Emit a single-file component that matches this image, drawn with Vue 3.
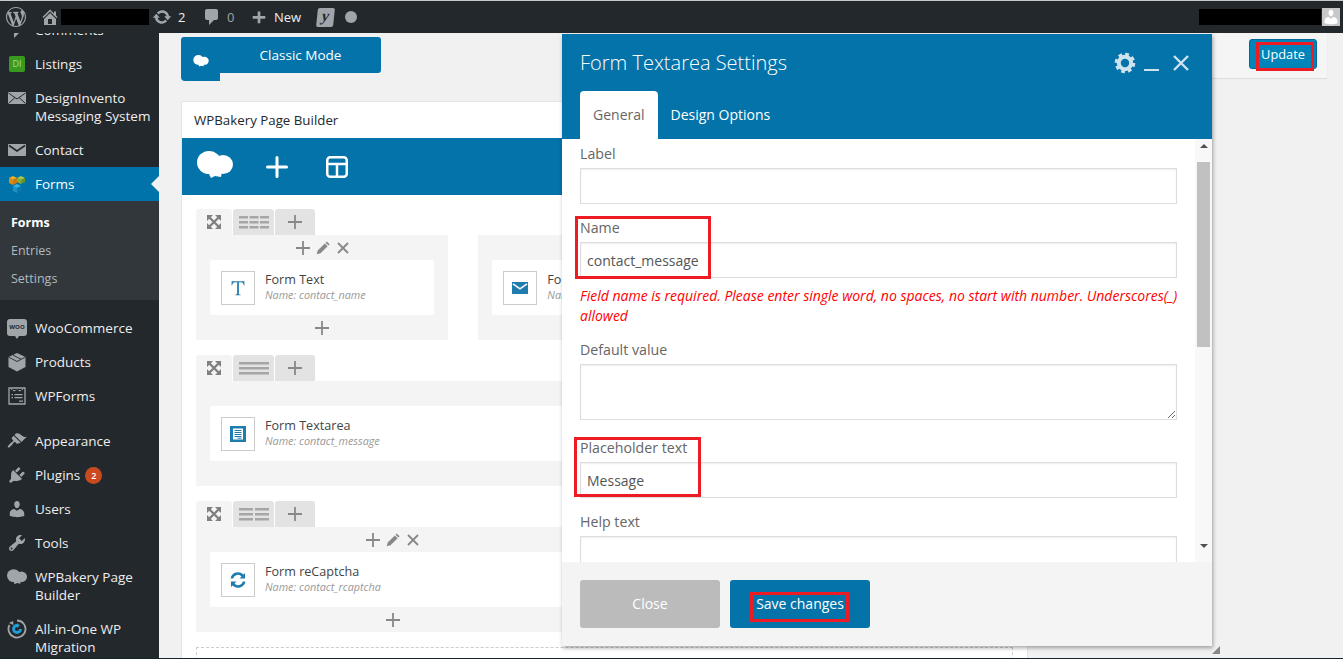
<script setup>
const menu = [
  { label: 'Comments', icon: 'i-comment' },
  { label: 'Listings', icon: 'di' },
  { label: 'DesignInvento Messaging System', icon: 'i-mail-line', tall: true },
  { label: 'Contact', icon: 'i-mail' },
  { label: 'Forms', icon: 'i-forms', active: true },
]
const subs = [
  { label: 'Forms', current: true },
  { label: 'Entries' },
  { label: 'Settings' },
]
const shop = [
  { label: 'WooCommerce', icon: 'woo' },
  { label: 'Products', icon: 'i-box' },
  { label: 'WPForms', icon: 'i-wpforms' },
]
const site = [
  { label: 'Appearance', icon: 'i-brush' },
  { label: 'Plugins', icon: 'i-plug', badge: 2 },
  { label: 'Users', icon: 'i-user' },
  { label: 'Tools', icon: 'i-tool' },
  { label: 'WPBakery Page Builder', icon: 'i-cloud', tall: true },
  { label: 'All-in-One WP Migration', icon: 'i-ring', tall: true },
]
const rows = [
  {
    groups: 3,
    controls: true,
    cols: [
      { title: 'Form Text', name: 'contact_name', icon: 'i-t' },
      { title: 'Form Email', name: 'contact_email', icon: 'i-env' },
      { title: 'Form Submit', name: 'contact_submit', icon: 'i-t' },
    ],
  },
  {
    groups: 1,
    controls: false,
    cols: [{ title: 'Form Textarea', name: 'contact_message', icon: 'i-doc' }],
  },
  {
    groups: 2,
    controls: true,
    cols: [
      { title: 'Form reCaptcha', name: 'contact_rcaptcha', icon: 'i-sync' },
      { title: 'Form Submit', name: 'contact_submit', icon: 'i-t' },
    ],
  },
]
const barSets = {
  1: [[0, 30]],
  2: [[0, 14], [16, 14]],
  3: [[0, 9], [10.5, 9], [21, 9]],
}
</script>

<template>
  <div class="page">
    <svg class="defs" aria-hidden="true">
      <symbol id="i-wp" viewBox="0 0 20 20"><path d="M20 10c0-5.51-4.49-10-10-10C4.48 0 0 4.49 0 10c0 5.52 4.48 10 10 10 5.51 0 10-4.48 10-10zM7.78 15.37L4.37 6.22c.55-.02 1.17-.08 1.17-.08.5-.06.44-1.13-.06-1.11 0 0-1.45.11-2.37.11-.18 0-.37 0-.58-.01C4.12 2.69 6.87 1.11 10 1.11c2.33 0 4.45.87 6.05 2.34-.68-.11-1.65.39-1.65 1.58 0 .74.45 1.36.9 2.1.35.61.55 1.36.55 2.46 0 1.49-1.4 5-1.4 5l-3.03-8.37c.54-.02.82-.17.82-.17.5-.05.44-1.25-.06-1.22 0 0-1.44.12-2.38.12-.87 0-2.33-.12-2.33-.12-.5-.03-.56 1.2-.06 1.22l.92.08 1.26 3.41zM17.41 10c.24-.64.74-1.87.43-4.25.7 1.29 1.05 2.71 1.05 4.25 0 3.29-1.73 6.24-4.4 7.78.97-2.59 1.94-5.2 2.92-7.78zM6.1 18.09C3.12 16.65 1.11 13.53 1.11 10c0-1.3.23-2.48.72-3.59C3.25 10.3 4.67 14.2 6.1 18.09zm4.03-6.63l2.58 6.98c-.86.29-1.76.45-2.71.45-.79 0-1.57-.11-2.29-.33.81-2.38 1.62-4.74 2.42-7.1z"/></symbol>
      <symbol id="i-home" viewBox="0 0 20 20"><path d="M16 8.5l1.53 1.53-1.06 1.06L10 4.62l-6.47 6.47-1.06-1.06L10 2.5l4 4v-2h2v4zm-6-2.46l6 5.99V18H4v-5.97zM12 17v-5H8v5h4z"/></symbol>
      <symbol id="i-update" viewBox="0 0 20 20"><path d="M10.2 3.28c3.53 0 6.43 2.61 6.92 6h2.08l-3.5 4-3.5-4h2.32c-.45-1.97-2.21-3.45-4.32-3.45-1.45 0-2.73.71-3.54 1.78L4.95 5.66C6.23 4.2 8.11 3.28 10.2 3.28zm-.4 13.44c-3.52 0-6.43-2.61-6.92-6H.8l3.5-4c1.17 1.33 2.33 2.67 3.5 4H5.48c.45 1.97 2.21 3.45 4.32 3.45 1.45 0 2.73-.71 3.54-1.78l1.71 1.95c-1.28 1.46-3.15 2.38-5.25 2.38z"/></symbol>
      <symbol id="i-comment" viewBox="0 0 20 20"><path d="M5 2h9c1.1 0 2 .9 2 2v7c0 1.1-.9 2-2 2h-2l-5 5v-5H5c-1.1 0-2-.9-2-2V4c0-1.1.9-2 2-2z"/></symbol>
      <symbol id="i-plus-bold" viewBox="0 0 20 20"><path d="M17 9v3h-5.5v5h-3v-5H3V9h5.5V4h3v5z"/></symbol>
      <symbol id="i-mail" viewBox="0 0 20 20"><path d="M2 4h16c.6 0 1 .4 1 1v10c0 .6-.4 1-1 1H2c-.6 0-1-.4-1-1V5c0-.6.4-1 1-1z"/><path d="M2 5.5l8 5.5 8-5.5" fill="none" stroke="#23282d" stroke-width="1.6"/></symbol>
      <symbol id="i-mail-line" viewBox="0 0 20 20"><path d="M2 4h16c.6 0 1 .4 1 1v10c0 .6-.4 1-1 1H2c-.6 0-1-.4-1-1V5c0-.6.4-1 1-1z"/><path d="M1.500 5l8.500 6 8.500-6M1.500 15.500L8 9.500M18.500 15.500L12 9.500" fill="none" stroke="#23282d" stroke-width="1"/></symbol>
      <symbol id="i-forms" viewBox="0 0 20 20">
        <path d="M2 4l4-2 4 2-4 2z" fill="#f2b01e"/><path d="M2 4l4 2v5L2 9z" fill="#e08a12"/><path d="M10 4L6 6v5l4-2z" fill="#c77a10"/>
        <path d="M10 4l4-2 4 2-4 2z" fill="#a8c84a"/><path d="M10 4l4 2v4l-4-2z" fill="#8ab033"/><path d="M18 4l-4 2v4l4-2z" fill="#6f9426"/>
        <path d="M6 12l4-2 4 2-4 2z" fill="#35b5e5"/><path d="M6 12l4 2v5l-4-2z" fill="#1a94c8"/><path d="M14 12l-4 2v5l4-2z" fill="#0e78a8"/>
      </symbol>
      <symbol id="i-box" viewBox="0 0 20 20"><path d="M10 1l8.500 4v10L10 19.500 1.500 15V5z"/><path d="M1.800 5.200L10 9.500l8.200-4.300M6 3.200l8 4" fill="none" stroke="#23282d" stroke-width=".9"/></symbol>
      <symbol id="i-wpforms" viewBox="0 0 20 20"><path d="M2 2h16v16H2z" fill="none" stroke="currentColor" stroke-width="1.300"/><path d="M4 2.500l3 3 3-2 3 2 3-3V4H4zM4.500 8H6v1.300H4.500zM7.500 8h8v1.300h-8zM4.500 11H6v1.300H4.500zM7.500 11h8v1.300h-8zM12 14.500h4v1.300h-4z"/></symbol>
      <symbol id="i-brush" viewBox="0 0 20 20"><path d="M14.480 11.060L7.410 3.990l1.500-1.500c.5-.56 2.300-.47 3.510.32 1.210.8 1.430 1.280 2.910 2.100 1.180.64 2.450 1.260 4.450.85zm-.71.71L6.700 4.700 4.930 6.470c-.39.39-.39 1.020 0 1.410l1.060 1.060c.39.39.39 1.030 0 1.420-.6.6-1.430 1.110-2.210 1.690-.35.26-.7.53-1.010.84-1.340 1.340-2.500 2.930-1.880 3.550.62.62 2.210-.54 3.550-1.880.31-.31.580-.66.840-1.010.58-.78 1.090-1.610 1.690-2.210.39-.39 1.030-.39 1.420 0l1.060 1.060c.39.39 1.020.39 1.410 0z"/></symbol>
      <symbol id="i-plug" viewBox="0 0 20 20"><path d="M13.110 4.360L9.870 7.600 8 5.730l3.240-3.240c.35-.34 1.050-.2 1.560.32.52.51.66 1.210.31 1.550zm-8 1.770l.91-1.120 9.010 9.010-1.190.84c-.71.71-2.630 1.160-3.820 1.160H6.140L4.900 17.260c-.59.59-1.540.59-2.120 0-.59-.58-.59-1.530 0-2.120l1.240-1.240v-3.880c0-1.130.4-3.190 1.090-3.890zm7.260 3.970l3.240-3.240c.34-.35 1.040-.21 1.550.31.52.51.66 1.210.31 1.550l-3.240 3.250z"/></symbol>
      <symbol id="i-user" viewBox="0 0 20 20"><path d="M10 9.250c-2.270 0-2.730-3.440-2.730-3.440C7 4.020 7.820 2 9.970 2c2.160 0 2.980 2.020 2.710 3.810 0 0-.41 3.440-2.680 3.440zm0 2.570L12.720 10c2.390 0 4.520 2.330 4.520 4.530v2.490s-3.650 1.130-7.240 1.130c-3.650 0-7.240-1.130-7.240-1.130v-2.490c0-2.250 1.940-4.480 4.470-4.480z"/></symbol>
      <symbol id="i-tool" viewBox="0 0 20 20"><path d="M16.680 9.770c-1.340 1.340-3.300 1.670-4.950.99l-5.410 6.520c-.99.99-2.590.99-3.580 0s-.99-2.590 0-3.570l6.520-5.420c-.68-1.650-.35-3.610.99-4.950 1.280-1.280 3.120-1.620 4.720-1.060l-2.890 2.890 2.820 2.820 2.860-2.870c.53 1.580.18 3.390-1.080 4.650zM3.810 16.210c.4.39 1.040.39 1.430 0 .4-.4.4-1.040 0-1.430-.39-.4-1.030-.4-1.430 0-.39.39-.39 1.030 0 1.430z"/></symbol>
      <symbol id="i-cloud" viewBox="0 0 36 28"><ellipse cx="12" cy="11.500" rx="12" ry="11.500"/><ellipse cx="26" cy="13.500" rx="10" ry="9.500"/><path d="M11 21l14-1-1 6-6-1-4 2z"/></symbol>
      <symbol id="i-ring" viewBox="0 0 20 20"><path d="M10 1.500a8.500 8.500 0 1 1-7.500 4.500" fill="none" stroke="currentColor" stroke-width="1.800"/><path d="M2 4l4-2 .5 4z"/><path d="M13.500 10a3.500 3.500 0 1 1-3.500-3.500" fill="none" stroke="#1f9fd8" stroke-width="2.800"/><path d="M10 4l3 2.500L10 9z" fill="#1f9fd8"/></symbol>
      <symbol id="i-expand" viewBox="0 0 14 14"><path d="M0 0h6L0 6zM14 0v6L8 0zM0 14V8l6 6zM14 14H8l6-6z"/><path d="M2 2l10 10M12 2L2 12" fill="none" stroke="currentColor" stroke-width="2.400"/></symbol>
      <symbol id="i-pencil" viewBox="0 0 16 16"><path d="M11.500 1.500l3 3-1.300 1.300-3-3zM9.400 3.600l3 3-7.600 7.600-4 1 1-4z"/></symbol>
      <symbol id="i-t" viewBox="0 0 20 20"><path d="M2 1.500h16v5.500h-.7c-.3-2.800-1.200-4.300-3.800-4.300h-2.400v14.600c0 .8.500 1 2.200 1.100v.8H6.700v-.8c1.700-.1 2.200-.3 2.200-1.100V2.700H6.500c-2.600 0-3.500 1.500-3.800 4.300H2z"/></symbol>
      <symbol id="i-env" viewBox="0 0 16 12"><path d="M0 0h16v12H0z"/><path d="M1 1.800l7 5 7-5" fill="none" stroke="#fff" stroke-width="1.500"/></symbol>
      <symbol id="i-doc" viewBox="0 0 16 16"><path d="M0 0h16v16H0z"/><path d="M3 2.500h10v11H3z" fill="#fff"/><path d="M4.500 4.500h7M4.500 6.500h7M4.500 8.500h7M4.500 10.500h7M7.500 12.200h4" stroke="currentColor" stroke-width="1"/></symbol>
      <symbol id="i-sync" viewBox="0 0 16 16"><path d="M15 1v5.500H9.500l2.100-2.100A5 5 0 0 0 3.100 6.500H.6a7.500 7.500 0 0 1 12.800-3.900zM1 15V9.500h5.500l-2.100 2.100a5 5 0 0 0 8.500-2.100h2.500a7.500 7.500 0 0 1-12.800 3.900z"/></symbol>
    </svg>

    <header class="adminbar">
      <svg class="ab-wp"><use href="#i-wp" /></svg>
      <svg class="ab-home"><use href="#i-home" /></svg>
      <span class="redact redact-site"></span>
      <svg class="ab-update"><use href="#i-update" /></svg>
      <span class="ab-count">2</span>
      <svg class="ab-comment"><use href="#i-comment" /></svg>
      <span class="ab-count ab-zero">0</span>
      <svg class="ab-new"><use href="#i-plus-bold" /></svg>
      <span class="ab-label">New</span>
      <span class="ab-yoast">y</span>
      <span class="ab-dot"></span>
      <span class="ab-spacer"></span>
      <span class="redact redact-user"></span>
      <span class="ab-avatar">
        <svg viewBox="0 0 20 20"><use href="#i-user" /></svg>
      </span>
    </header>

    <div class="body">
      <aside class="sidebar">
        <nav class="menu">
          <template v-for="item in menu" :key="item.label">
            <a class="item" :class="{ tall: item.tall, active: item.active }">
              <span v-if="item.icon === 'di'" class="ic-di">DI</span>
              <svg v-else class="ic"><use :href="'#' + item.icon" /></svg>
              <span class="item-label">{{ item.label }}</span>
            </a>
          </template>
          <div class="submenu">
            <a v-for="s in subs" :key="s.label" class="sub" :class="{ current: s.current }">{{ s.label }}</a>
          </div>
          <div class="group">
            <a v-for="item in shop" :key="item.label" class="item">
              <span v-if="item.icon === 'woo'" class="ic-woo">WOO</span>
              <svg v-else class="ic"><use :href="'#' + item.icon" /></svg>
              <span class="item-label">{{ item.label }}</span>
            </a>
          </div>
          <div class="group">
            <a v-for="item in site" :key="item.label" class="item" :class="{ tall: item.tall }">
              <svg class="ic"><use :href="'#' + item.icon" /></svg>
              <span class="item-label">{{ item.label }}</span>
              <span v-if="item.badge" class="badge">{{ item.badge }}</span>
            </a>
          </div>
        </nav>
      </aside>

      <main class="main">
        <div class="toprow">
          <div class="classic">
            <span class="classic-tab"><svg><use href="#i-cloud" /></svg></span>
            <span class="classic-label">Classic Mode</span>
          </div>
          <div class="publish">
            <button class="update">Update</button>
          </div>
        </div>

        <section class="builder">
          <h2 class="builder-title">WPBakery Page Builder</h2>
          <div class="builder-bar">
            <svg class="bar-cloud"><use href="#i-cloud" /></svg>
            <svg class="bar-plus" viewBox="0 0 22 22"><path d="M11 1.500v19M1.500 11h19" /></svg>
            <svg class="bar-layout" viewBox="0 0 22 22"><rect x="1.250" y="1.250" width="19.500" height="19.500" rx="3" /><path d="M1.500 8h19M11 8v12.500" /></svg>
          </div>
          <div class="rows">
            <div v-for="(row, r) in rows" :key="r" class="row">
              <div class="row-tabs">
                <span class="tab tab-open"><svg class="i-expand"><use href="#i-expand" /></svg></span>
                <span class="tab tab-cols">
                  <svg viewBox="0 0 30 13" class="i-bars">
                    <template v-for="(b, i) in barSets[row.groups]" :key="i">
                      <rect v-for="y in [0, 5, 10]" :key="y" :x="b[0]" :y="y" :width="b[1]" height="2.500" />
                    </template>
                  </svg>
                </span>
                <span class="tab tab-add"><svg class="i-plus" viewBox="0 0 14 14"><path d="M7 0v14M0 7h14" /></svg></span>
              </div>
              <div class="row-body" :class="'cols-' + row.cols.length">
                <div v-for="col in row.cols" :key="col.title + col.name" class="col">
                  <div class="col-tools">
                    <template v-if="row.controls">
                      <svg class="i-plus" viewBox="0 0 14 14"><path d="M7 0v14M0 7h14" /></svg>
                      <svg class="i-pencil"><use href="#i-pencil" /></svg>
                      <svg class="i-close" viewBox="0 0 12 12"><path d="M1 1l10 10M11 1L1 11" /></svg>
                    </template>
                  </div>
                  <div class="card">
                    <span class="card-icon"><svg><use :href="'#' + col.icon" /></svg></span>
                    <div class="card-text">
                      <div class="card-title">{{ col.title }}</div>
                      <div class="card-name">Name: {{ col.name }}</div>
                    </div>
                  </div>
                  <div class="col-tools">
                    <svg v-if="row.controls" class="i-plus" viewBox="0 0 14 14"><path d="M7 0v14M0 7h14" /></svg>
                  </div>
                </div>
              </div>
            </div>
            <div class="dropzone"></div>
          </div>
        </section>
      </main>

      <section class="modal">
        <header class="modal-head">
          <div class="modal-top">
            <h1 class="modal-title">Form Textarea Settings</h1>
            <div class="modal-actions">
              <svg class="m-gear" viewBox="0 0 22 22"><circle cx="11" cy="11" r="6.200" class="gear-ring" /><circle cx="11" cy="11" r="8.800" class="gear-teeth" /></svg>
              <span class="m-min"></span>
              <svg class="m-close" viewBox="0 0 16 16"><path d="M1 1l14 14M15 1L1 15" /></svg>
            </div>
          </div>
          <div class="modal-tabs">
            <span class="m-tab on">General</span>
            <span class="m-tab">Design Options</span>
          </div>
        </header>

        <div class="modal-body">
          <div class="fields">
            <div class="field">
              <div class="f-label">Label</div>
              <div class="f-input"></div>
            </div>
            <div class="field">
              <div class="f-label">Name</div>
              <div class="f-input">contact_message</div>
              <div class="f-error">Field name is required. Please enter single word, no spaces, no start with number. Underscores(_) allowed</div>
              <span class="mark mark-name"></span>
            </div>
            <div class="field">
              <div class="f-label">Default value</div>
              <textarea class="f-area"></textarea>
            </div>
            <div class="field">
              <div class="f-label">Placeholder text</div>
              <div class="f-input">Message</div>
              <span class="mark mark-place"></span>
            </div>
            <div class="field">
              <div class="f-label">Help text</div>
              <div class="f-input"></div>
            </div>
          </div>
          <div class="scroll">
            <span class="arrow up"></span>
            <span class="thumb"></span>
            <span class="arrow down"></span>
          </div>
        </div>

        <footer class="modal-foot">
          <button class="btn btn-close">Close</button>
          <button class="btn btn-save">Save changes<span class="mark mark-save"></span></button>
        </footer>
        <span class="grip"></span>
      </section>

      <span class="mark mark-update"></span>
    </div>
    <div class="bottomline"></div>
  </div>
</template>

<style>
html, body { margin: 0; padding: 0; background: #f1f1f1; overflow: hidden; }
</style>

<style scoped>
* { box-sizing: border-box; }
.defs { position: absolute; width: 0; height: 0; }
.page {
  height: 659px;
  display: flex;
  flex-direction: column;
  overflow: hidden;
  font-family: "Open Sans", "Noto Sans", sans-serif;
  font-size: 14px;
  color: #444;
}

/* admin bar */
.adminbar {
  height: 33px;
  flex: none;
  display: flex;
  align-items: center;
  background: #23282d;
  border-top: 1px solid #c9c9c9;
  color: #eee;
  font-size: 13px;
  fill: #a0a5aa;
}
.adminbar svg { display: block; }
.ab-wp { width: 20px; height: 20px; margin-left: 6px; }
.ab-home { width: 20px; height: 20px; margin-left: 14px; }
.redact { background: #000; display: block; height: 16px; }
.redact-site { width: 88px; margin-left: 1px; }
.ab-update { width: 20px; height: 20px; margin-left: 3px; }
.ab-count { margin-left: 6px; width: 9px; }
.ab-comment { width: 20px; height: 20px; margin-left: 15px; }
.ab-zero { color: #9ea3a8; margin-left: 5px; }
.ab-new { width: 18px; height: 18px; margin-left: 14px; }
.ab-label { margin-left: 6px; }
.ab-yoast {
  width: 17px;
  height: 19px;
  margin-left: 16px;
  background: #a0a5aa;
  border-radius: 2px;
  transform: skewX(-6deg);
  color: #23282d;
  font: italic 700 16px/16px "Liberation Serif", serif;
  text-align: center;
}
.ab-dot { width: 12px; height: 12px; margin-left: 11px; border-radius: 50%; background: #a0a5aa; }
.ab-spacer { flex: 1; }
.redact-user { width: 122px; }
.ab-avatar { width: 18px; height: 18px; margin: 0 3px 0 1px; background: #c8c8c8; overflow: hidden; fill: #fff; }
.ab-avatar svg { width: 18px; height: 18px; }

/* body */
.body { flex: 1; min-height: 0; display: flex; position: relative; }

/* sidebar */
.sidebar { width: 159px; flex: none; background: #23282d; overflow: hidden; }
.menu { margin-top: -20px; }
.item {
  display: flex;
  align-items: center;
  height: 34px;
  color: #eee;
  fill: #a0a5aa;
  position: relative;
  font-size: 13.5px;
  line-height: 18px;
}
.item.tall { height: 52px; }
.item.active { background: #0073aa; color: #fff; }
.item.active::after {
  content: "";
  position: absolute;
  right: 0;
  top: 9px;
  border: 8px solid transparent;
  border-right-color: #f1f1f1;
  border-left-width: 0;
}
.ic { width: 20px; height: 20px; margin-left: 7px; flex: none; color: #a0a5aa; }
.tall .ic { margin-top: -18px; }
.item-label { margin-left: 8px; }
.ic-di {
  width: 16px;
  height: 16px;
  margin: 0 2px 0 9px;
  background: #3a9a1f;
  color: #a9dc96;
  border-radius: 2px;
  font-size: 9px;
  line-height: 16px;
  text-align: center;
  flex: none;
}
.ic-woo {
  width: 20px;
  height: 17px;
  margin: -2px 0 0 7px;
  background: #a0a5aa;
  color: #23282d;
  border-radius: 3px;
  font-size: 6px;
  font-weight: 700;
  line-height: 17px;
  text-align: center;
  flex: none;
  position: relative;
}
.ic-woo::after {
  content: "";
  position: absolute;
  left: 8px;
  bottom: -3px;
  border: 2px solid transparent;
  border-top-color: #a0a5aa;
  border-bottom-width: 0;
  border-top-width: 3px;
}
.submenu { background: #32373c; padding: 8px 0 7px; }
.sub { display: block; height: 28px; line-height: 28px; padding-left: 11px; font-size: 12.5px; color: #b4b9be; }
.sub.current { color: #fff; font-weight: 700; }
.group { margin-top: 11px; }
.badge {
  width: 17px;
  height: 17px;
  margin-left: 5px;
  border-radius: 50%;
  background: #ca4a1f;
  color: #fff;
  font-size: 9px;
  font-weight: 600;
  line-height: 17px;
  text-align: center;
}

/* main */
.main { flex: 1; min-width: 0; padding-left: 22px; background: #f1f1f1; overflow: hidden; }
.toprow { display: flex; justify-content: space-between; height: 48px; padding-right: 16px; }
.classic { display: flex; align-items: flex-start; margin-top: 4px; }
.classic-tab {
  width: 39px;
  height: 44px;
  background: #0473aa;
  border-radius: 3px 0 0 4px;
  padding: 18px 0 0 12px;
  fill: #fff;
}
.classic-tab svg { display: block; width: 16px; height: 12px; }
.classic-label {
  width: 161px;
  height: 36px;
  background: #0473aa;
  border-radius: 0 3px 3px 0;
  color: #fff;
  font-size: 13.5px;
  line-height: 36px;
  text-align: center;
}
.publish {
  width: 150px;
  height: 45px;
  background: #f5f5f5;
  box-shadow: 0 1px 1px rgba(0, 0, 0, .08);
  padding: 6px 10px 0 0;
  display: flex;
  justify-content: flex-end;
}
.update {
  width: 68px;
  height: 30px;
  background: #0085ba;
  border: 1px solid #006799;
  border-radius: 3px;
  color: #fff;
  font: 12.8px "Open Sans", sans-serif;
  padding: 0;
}

/* builder */
.builder {
  margin: 21px 0 0 1px;
  width: 845px;
  background: #fff;
  box-shadow: 0 0 0 1px #e5e5e5;
}
.builder-title {
  margin: 0;
  height: 36px;
  padding-left: 12px;
  font-size: 13.3px;
  font-weight: 500;
  line-height: 36px;
  color: #23282d;
}
.builder-bar {
  height: 57px;
  background: #0473aa;
  display: flex;
  align-items: center;
  padding-left: 15px;
  fill: #fff;
}
.bar-cloud { width: 36px; height: 28px; margin-top: -3px; }
.bar-plus { width: 22px; height: 22px; margin: 0 0 0 33px; fill: none; stroke: #fff; stroke-width: 3; stroke-linecap: round; }
.bar-layout { width: 22px; height: 22px; margin-left: 38px; fill: none; stroke: #fff; stroke-width: 2.500; }
.rows { padding: 14px 14px 0; }
.row { margin-bottom: 15px; }
.row-tabs { display: flex; height: 26px; gap: 1px; }
.tab {
  display: flex;
  align-items: center;
  justify-content: center;
  border-radius: 3px 3px 0 0;
  background: #e3e3e3;
}
.tab-open { width: 36px; background: #f4f4f4; }
.tab-cols { width: 41px; }
.tab-add { width: 40px; }
.i-expand { width: 14px; height: 14px; fill: #808080; color: #808080; }
.i-bars { width: 30px; height: 13px; fill: #a6a6a6; }
.i-plus { width: 14px; height: 14px; fill: none; stroke: #888; stroke-width: 1.800; flex: none; }
.i-pencil { width: 15px; height: 15px; fill: #888; flex: none; }
.i-close { width: 12px; height: 12px; fill: none; stroke: #888; stroke-width: 1.800; flex: none; }
.row-body { display: grid; gap: 30px; height: 105px; }
.cols-1 { grid-template-columns: 1fr; }
.cols-2 { grid-template-columns: 1fr 1fr; }
.cols-3 { grid-template-columns: 1fr 1fr 1fr; }
.col { background: #f4f4f4; padding: 0 14px; display: flex; flex-direction: column; }
.col-tools { height: 25px; display: flex; align-items: center; justify-content: center; gap: 6px; }
.card {
  height: 55px;
  background: #fff;
  border-radius: 2px;
  display: flex;
  align-items: center;
  padding-left: 11px;
}
.card-icon {
  width: 34px;
  height: 34px;
  border: 1px solid #ccc;
  display: flex;
  align-items: center;
  justify-content: center;
  color: #1e7cae;
  fill: #1e7cae;
  flex: none;
}
.card-icon svg { width: 16px; height: 16px; }
.card-text { margin-left: 10px; margin-top: -1px; }
.card-title { font-size: 12.6px; line-height: 16px; color: #444; }
.card-name { font-size: 10.8px; line-height: 14px; font-style: italic; color: #999; }
.dropzone { height: 40px; border: 1px dashed #ccc; }

/* modal */
.modal {
  position: absolute;
  left: 562px;
  top: 1px;
  width: 650px;
  height: 612px;
  display: flex;
  flex-direction: column;
  background: #f4f4f4;
  box-shadow: 1px 2px 4px rgba(0, 0, 0, .35);
}
.modal-head { height: 105px; flex: none; background: #0473aa; color: #fff; padding: 0 0 0 18px; }
.modal-top { height: 57px; display: flex; align-items: center; justify-content: space-between; padding: 0 23px 0 0; }
.modal-title { margin: 0; font-size: 20px; font-weight: 300; line-height: 56px; }
.modal-actions { display: flex; align-items: center; margin-top: 1px; }
.m-gear { width: 22px; height: 22px; fill: none; }
.gear-ring { stroke: #cfe3ee; stroke-width: 4; }
.gear-teeth { stroke: #cfe3ee; stroke-width: 3; stroke-dasharray: 3.700 3.210; }
.m-min { width: 15px; height: 2.500px; margin: 14px 0 0 8px; background: #cfe3ee; }
.m-close { width: 16px; height: 16px; margin-left: 14px; fill: none; stroke: #cfe3ee; stroke-width: 2.400; }
.modal-tabs { display: flex; height: 48px; }
.m-tab { padding: 0 13px; line-height: 48px; font-size: 14px; color: #fff; }
.m-tab.on { background: #fff; color: #666; border-radius: 4px 4px 0 0; }
.modal-body { height: 423px; flex: none; display: flex; background: #fff; overflow: hidden; }
.fields { flex: 1; min-width: 0; padding: 5px 18px 0; }
.field { position: relative; margin-bottom: 14px; }
.f-label { height: 20px; line-height: 20px; margin-bottom: 4px; font-size: 14.2px; font-weight: 500; color: #666; }
.f-input {
  height: 36px;
  border: 1px solid #ddd;
  box-shadow: inset 0 1px 2px rgba(0, 0, 0, .07);
  padding-left: 6px;
  line-height: 36px;
  font-size: 14px;
  color: #555;
}
.f-area {
  display: block;
  width: 100%;
  height: 56px;
  margin: 0 0 18px;
  border: 1px solid #ddd;
  box-shadow: inset 0 1px 2px rgba(0, 0, 0, .07);
  background: #fff;
  border-radius: 0;
  outline: none;
}
.f-error { margin: 8px -4px 0 0; font-size: 14px; line-height: 20px; font-style: italic; color: #f00; }
.scroll {
  width: 17px;
  flex: none;
  background: #f8f8f8;
  display: flex;
  flex-direction: column;
  align-items: center;
  padding-top: 5px;
}
.arrow { width: 0; height: 0; border: 4px solid transparent; border-top-width: 0; border-bottom: 4px solid #505050; }
.arrow.down { border-bottom-width: 0; border-top: 4px solid #505050; margin-top: 197px; }
.thumb { width: 13px; height: 185px; margin-top: 14px; background: #c1c1c1; flex: none; }
.modal-foot { flex: 1; display: flex; gap: 10px; padding: 18px; }
.btn {
  position: relative;
  width: 140px;
  height: 48px;
  border: 0;
  border-radius: 3px;
  color: #fff;
  font: 14px "Open Sans", sans-serif;
  padding: 0 0 2px 0;
}
.btn-close { background: #bbb; }
.btn-save { background: #0473aa; }
.grip {
  position: absolute;
  right: -8px;
  bottom: -8px;
  width: 8px;
  height: 8px;
  background: #888;
  clip-path: polygon(100% 0, 100% 100%, 0 100%);
}

/* red annotation boxes */
.mark { position: absolute; border: 3px solid #ed1c24; pointer-events: none; }
.mark-name { left: -5px; top: -2px; width: 136px; height: 63px; }
.mark-place { left: -6px; top: -1px; width: 127px; height: 60px; }
.mark-save { left: 20px; top: 12px; width: 99px; height: 30px; }
.mark-update { left: 1256px; top: 9px; width: 58px; height: 29px; }

.bottomline { height: 1px; flex: none; background: #16242e; }
</style>
